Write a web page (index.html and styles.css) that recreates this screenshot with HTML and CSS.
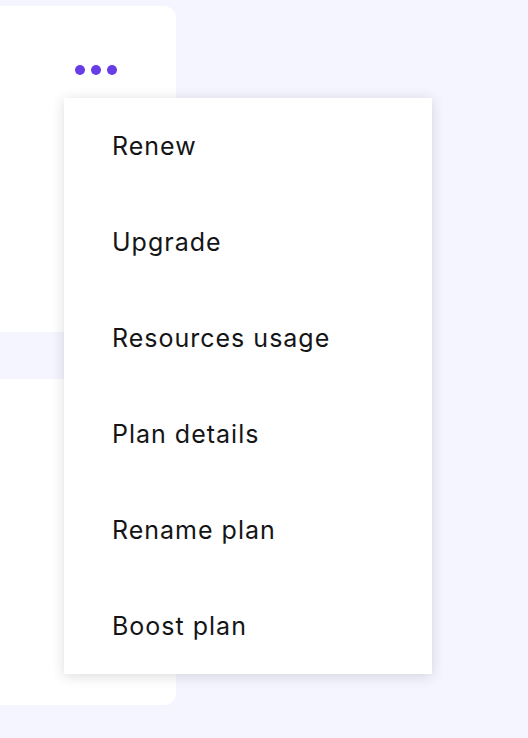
FILE: index.html
```html
<!DOCTYPE html>
<html lang="en">
<head>
  <meta charset="UTF-8">
  <meta name="viewport" content="width=device-width, initial-scale=1.0">
  <title>Plan menu</title>
  <link rel="stylesheet" href="styles.css">
</head>
<body>
  <div class="card">
    <div class="card-top">
      <button class="more-btn" aria-label="More actions">
        <span class="dot"></span><span class="dot"></span><span class="dot"></span>
      </button>
    </div>
    <div class="card-band"></div>
  </div>

  <!-- Dropdown menu -->
  <ul class="menu">
    <li class="menu-item">Renew</li>
    <li class="menu-item">Upgrade</li>
    <li class="menu-item">Resources usage</li>
    <li class="menu-item">Plan details</li>
    <li class="menu-item">Rename plan</li>
    <li class="menu-item">Boost plan</li>
  </ul>
</body>
</html>
```

FILE: styles.css
```css
body {
  margin: 0;
  padding-top: 6px;
  background-color: #f4f5ff;
  font-family: "Inter", "Noto Sans", sans-serif;
  color: #1d1e20;
  position: relative;
  height: 738px;
  box-sizing: border-box;
  overflow: hidden;
}
.card {
  width: 176px;
  height: 699px;
  background-color: white;
  border-radius: 0 12px 12px 0;
}
.card-top {
  height: 326px;
  position: relative;
}
.more-btn {
  position: absolute;
  left: 75px;
  top: 59px;
  display: flex;
  gap: 6px;
  padding: 0;
  border: none;
  background: none;
  cursor: pointer;
}
.dot {
  width: 10px;
  height: 10px;
  border-radius: 50%;
  background-color: #673de6;
}
.card-band {
  height: 47px;
  background-color: #f4f5ff;
}
.menu {
  position: absolute;
  left: 64px;
  top: 98px;
  width: 368px;
  margin: 0;
  padding: 0;
  list-style: none;
  background-color: white;
  box-shadow: 0 2px 12px rgba(29, 30, 32, 0.16);
}
.menu-item {
  height: 96px;
  padding-left: 48px;
  display: flex;
  align-items: center;
  font-size: 25px;
  letter-spacing: 1px;
  color: #141517;
  cursor: pointer;
}
```
